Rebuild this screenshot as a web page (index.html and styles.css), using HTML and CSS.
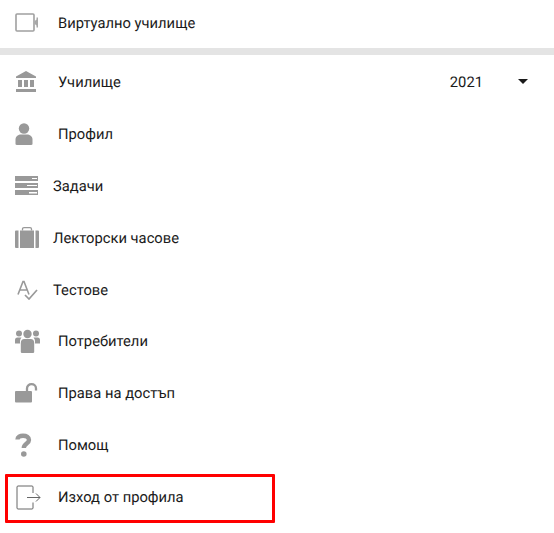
FILE: index.html
```html
<!DOCTYPE html>
<html lang="en">
<head>
  <meta charset="UTF-8" />
  <meta name="viewport" content="width=device-width, initial-scale=1" />
  <title>Меню</title>
  <link rel="stylesheet" href="styles.css">
</head>
<body>

  <div class="menu-item top-item">
    <span class="icon-slot">
      <svg width="26" height="20" viewBox="0 0 26 20"><rect x="1" y="1" width="18" height="17" rx="1" fill="none" stroke="#a0a0a0" stroke-width="1.6"/><path d="M19.5 8.3 L21.5 6.5 V4.5 H23 V14.5 H21.5 V12.5 L19.5 10.7 Z" fill="#a8a8a8"/></svg>
    </span>
    <span class="label">Виртуално училище</span>
  </div>

  <div class="divider"></div>

  <div class="menu-item">
    <span class="icon-slot">
      <svg width="22" height="22" viewBox="0 0 22 22"><path d="M11 0 L21 5.5 V7 H1 V5.5 Z M3 9 H7 V16 H3 Z M9 9 H13 V16 H9 Z M15 9 H19 V16 H15 Z M1 18 H21 V21 H1 Z" fill="#999"/></svg>
    </span>
    <span class="label">Училище</span>
    <span class="year">2021</span>
    <span class="caret"></span>
  </div>

  <div class="menu-item">
    <span class="icon-slot">
      <svg width="18" height="22" viewBox="0 0 18 22"><circle cx="9" cy="5.5" r="5.2" fill="#999"/><path d="M0.5 21 V16.5 C0.5 13 3.5 11.5 6 11.5 H12 C14.5 11.5 17.5 13 17.5 16.5 V21 Q17.5 22 16 22 H2 Q0.5 22 0.5 21 Z" fill="#999"/></svg>
    </span>
    <span class="label">Профил</span>
  </div>

  <div class="menu-item wide-icon">
    <span class="icon-slot">
      <svg width="24" height="19" viewBox="0 0 24 19"><path d="M0 0 H23 V5 H0 Z M0 7 H23 V12 H0 Z M0 14 H23 V19 H0 Z" fill="#999"/><path d="M17 2 H22 V3 H17 Z M12 9 H22 V10 H12 Z M14 16 H22 V17.5 H14 Z" fill="#fff"/></svg>
    </span>
    <span class="label">Задачи</span>
  </div>

  <div class="menu-item wide-icon">
    <span class="icon-slot">
      <svg width="24" height="22" viewBox="0 0 24 22"><path d="M7.5 3.5 V2 Q7.5 0.7 9 0.7 H15 Q16.5 0.7 16.5 2 V3.5" fill="none" stroke="#999" stroke-width="1.3"/><path d="M1 3.5 H3.5 V21 H1 Q0 21 0 20 V4.5 Q0 3.5 1 3.5 Z M5 3.5 H19 V21 H5 Z M20.5 3.5 H23 Q24 3.5 24 4.5 V20 Q24 21 23 21 H20.5 Z" fill="#999"/></svg>
    </span>
    <span class="label">Лекторски часове</span>
  </div>

  <div class="menu-item wide-icon">
    <span class="icon-slot test-icon">
      <svg width="22" height="20" viewBox="0 0 22 20"><path d="M2 14.5 L7 1.5 H8 L13 14.5 M4 10 H11" fill="none" stroke="#999" stroke-width="1.6"/><path d="M9 15 L13 19 L21 10" fill="none" stroke="#999" stroke-width="1.7"/></svg>
    </span>
    <span class="label">Тестове</span>
  </div>

  <div class="menu-item">
    <span class="icon-slot">
      <svg width="25" height="24" viewBox="0 0 25 24"><g fill="#999"><circle cx="12.5" cy="5" r="4.2"/><circle cx="4" cy="4.5" r="3"/><circle cx="21" cy="4.5" r="3"/><path d="M0 14.5 V11 Q0 8.5 2.5 8.5 H6.5 Q5 10 5 12 V14.5 Z M25 14.5 V11 Q25 8.5 22.5 8.5 H18.5 Q20 10 20 12 V14.5 Z"/><path d="M5.8 23 V14 Q5.8 10 9.5 10 H15.5 Q19.2 10 19.2 14 V23 Q19.2 24 18 24 H7 Q5.8 24 5.8 23 Z"/></g></svg>
    </span>
    <span class="label">Потребители</span>
  </div>

  <div class="menu-item">
    <span class="icon-slot">
      <svg width="23" height="20" viewBox="0 0 23 20"><rect x="0" y="8" width="17" height="11.5" rx="1" fill="#999"/><path d="M12 8 V5.5 C12 2.8 14 1.2 16.5 1.2 C19 1.2 21 2.8 21 5.5 V7.5" fill="none" stroke="#999" stroke-width="2.3"/></svg>
    </span>
    <span class="label">Права на достъп</span>
  </div>

  <div class="menu-item">
    <span class="icon-slot">
      <svg width="17" height="24" viewBox="0 0 17 24"><path d="M2.5 6.5 C2.5 4 5 2.8 8 2.8 C11.5 2.8 14 4.3 14 7 C14 10.5 8.8 10.5 8.8 15" fill="none" stroke="#999" stroke-width="4.4"/><circle cx="8.8" cy="21" r="2.8" fill="#999"/></svg>
    </span>
    <span class="label">Помощ</span>
  </div>

  <div class="menu-item marked">
    <span class="icon-slot logout-icon">
      <svg width="25" height="25" viewBox="0 0 25 25"><path d="M17 8 V2 Q17 1 16 1 H2 Q1 1 1 2 V23 Q1 24 2 24 H16 Q17 24 17 23 V17.5" fill="none" stroke="#666" stroke-width="1"/><path d="M11 12.5 H24 M20 8.5 L24 12.5 L20 16.5" fill="none" stroke="#666" stroke-width="1"/></svg>
    </span>
    <span class="label">Изход от профила</span>
  </div>

</body>
</html>
```

FILE: styles.css
```css
body {
  margin: 0;
  background: #fff;
  font-family: Roboto, 'Liberation Sans', sans-serif;
  font-size: 14.75px;
  color: #1a1a1a;
  text-rendering: geometricPrecision;
}

.menu-item {
  display: flex;
  align-items: center;
  height: 51.9px;
  padding-left: 15px;
  position: relative;
}

.top-item {
  height: 46px;
  margin-bottom: 2px;
}

.icon-slot {
  display: flex;
  align-items: center;
  width: 43px;
  flex-shrink: 0;
}

.wide-icon .icon-slot {
  width: 38px;
}

.test-icon svg {
  margin-left: 1px;
}

.logout-icon svg {
  margin-left: 1px;
}

.divider {
  height: 7px;
  margin-bottom: 1px;
  background: #e4e4e4;
}

.year {
  margin-left: auto;
}

.caret {
  width: 0;
  height: 0;
  margin: 0 26px 0 35px;
  border-left: 5px solid transparent;
  border-right: 5px solid transparent;
  border-top: 5px solid #1a1a1a;
}

.marked::after {
  content: "";
  position: absolute;
  left: 5px;
  top: 2.6px;
  width: 264px;
  height: 43px;
  border: 3px solid #f00;
  border-radius: 1px;
}
```
